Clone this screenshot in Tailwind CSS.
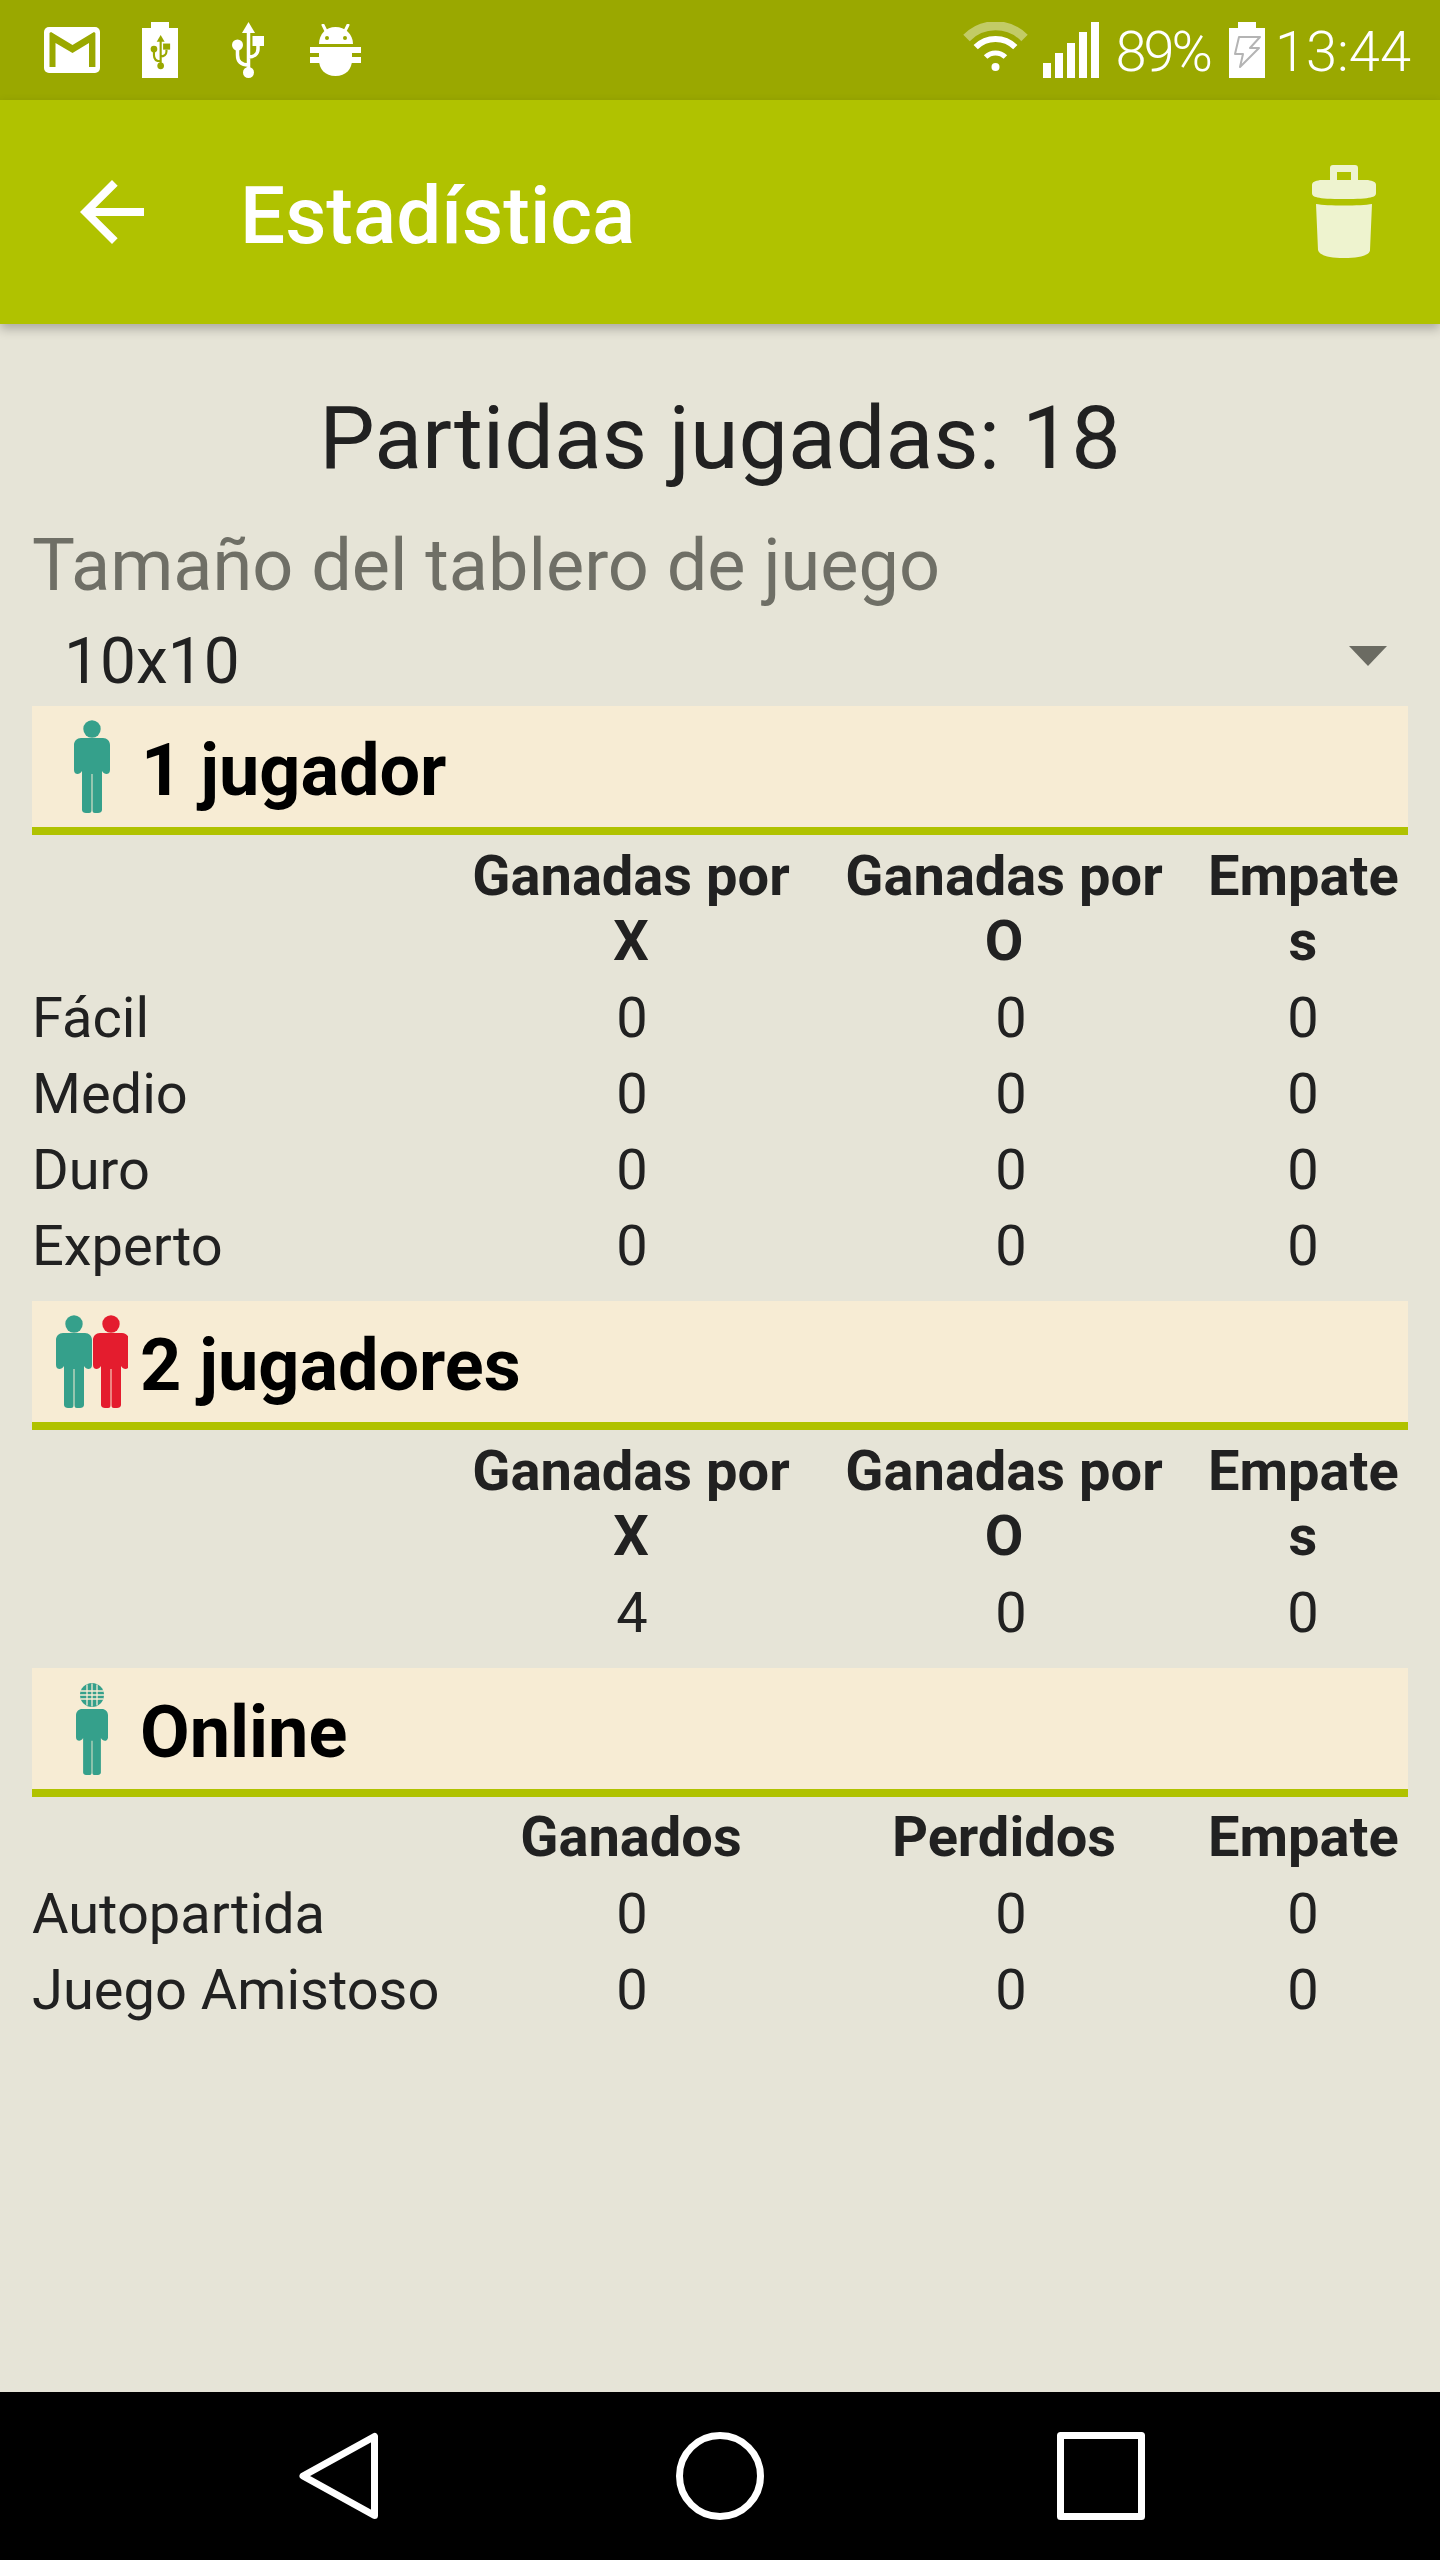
<!DOCTYPE html>
<html lang="es">
<head>
    <meta charset="UTF-8">
    <meta name="viewport" content="width=device-width, initial-scale=1.0">
    <title>Estadística</title>
    <script src="https://cdn.jsdelivr.net/npm/@tailwindcss/browser@4"></script>
</head>
<body class="bg-[#e6e4d7] [font-family:Roboto,sans-serif]">
    <svg class="hidden" width="0" height="0">
        <defs>
            <g id="usb">
                <path d="M16.5 0L10 11h13z" fill="currentColor"/>
                <path d="M16.5 10V48M5.5 26V33C5.5 40 10 43 16.5 43M26 24V27C26 32 22 35 16.5 35" fill="none" stroke="currentColor" stroke-width="3.5"/>
                <ellipse cx="16.5" cy="50.5" rx="5.5" ry="5.5" fill="currentColor"/>
                <ellipse cx="5.5" cy="23" rx="5.5" ry="5.5" fill="currentColor"/>
                <rect x="20.5" y="14" width="11.5" height="10" fill="currentColor"/>
            </g>
            <path id="person-body" d="M7 18H29C33 18 36 21 36 25V50C36 53 34 54 32.5 54C31 54 29 53 28 51V90C28 92 26 93 24 93H21C19 93 18.5 92 18.5 90V54H17.5V90C17.5 92 17 93 15 93H12C10 93 8 92 8 90V51C7 53 5 54 3.5 54C2 54 0 53 0 50V25C0 21 3 18 7 18Z"/>
        </defs>
    </svg>
    <div class="w-[1440px] h-[2560px] flex flex-col overflow-hidden">
        <!-- Status bar -->
        <div class="h-[100px] shrink-0 bg-[#9aa800] flex items-center justify-between text-white">
            <div class="flex items-start h-[56px] pl-[44px]">
                <svg class="mt-[5px]" width="56" height="46" viewBox="0 0 56 46">
                    <rect width="56" height="46" rx="5" fill="#fff"/>
                    <path d="M5.5 40V6L7 5L28.5 18L50 5L51.4 6V40H45V16L28.5 26L11.5 16V40Z" fill="#9aa800"/>
                </svg>
                <svg class="ml-[42px]" width="36" height="56" viewBox="0 0 36 56">
                    <path d="M9 0H27V6H36V56H0V6H9Z" fill="#fff"/>
                    <use href="#usb" transform="translate(8.6 13) scale(.61)" class="text-[#9aa800]"/>
                </svg>
                <svg class="ml-[54px]" width="32" height="56" viewBox="0 0 32 56"><use href="#usb" class="text-white"/></svg>
                <svg class="ml-[46px] mt-[2px]" width="51" height="52" viewBox="0 0 51 52" fill="#fff">
                    <path d="M13 1L17 9M38 1L34 9" stroke="#fff" stroke-width="3" stroke-linecap="round"/>
                    <path d="M9 20C9 10 16 3 25.500 3S43 10 43 20Z"/>
                    <circle cx="17" cy="14" r="2" fill="#9aa800"/>
                    <circle cx="35" cy="14" r="2" fill="#9aa800"/>
                    <path d="M9 23H42V36C42 45 36 52 25.500 52C15 52 9 45 9 36Z"/>
                    <rect y="23" width="51" height="6"/>
                    <rect y="33" width="51" height="6"/>
                </svg>
            </div>
            <div class="flex items-center pr-[29px] h-[56px]">
                <svg width="67" height="49" viewBox="0 0 67 49" class="-mt-[7px]">
                    <g fill="none" stroke="#fff">
                        <path d="M4.5 16A40.5 40.5 0 0 1 62.5 16" stroke-width="9" opacity=".4"/>
                        <path d="M13.7 25.2A28 28 0 0 1 53.3 25.2" stroke-width="6"/>
                        <path d="M23.6 35.1A14 14 0 0 1 43.4 35.1" stroke-width="5"/>
                    </g>
                    <circle cx="33.5" cy="45" r="4" fill="#fff"/>
                </svg>
                <svg class="ml-[14px]" width="56" height="56" viewBox="0 0 56 56" fill="#fff">
                    <rect x="0" y="41" width="8" height="15"/>
                    <rect x="12" y="31" width="8" height="25"/>
                    <rect x="24" y="21" width="8" height="35"/>
                    <rect x="36" y="10" width="8" height="46"/>
                    <rect x="48" y="0" width="8" height="56"/>
                </svg>
                <span class="ml-[16px] text-[56px] leading-[56px] pt-[4px] font-light tracking-[-3px]">89%</span>
                <svg class="ml-[19px]" width="36" height="56" viewBox="0 0 36 56">
                    <path d="M9 0H27V6H36V56H0V6H9Z" fill="#fff"/>
                    <path d="M10 15H31L21 26H30L11 45L14 32H6Z" fill="#fff" stroke="#b4b4b4" stroke-width="2" stroke-linejoin="round"/>
                </svg>
                <span class="ml-[10px] text-[56px] leading-[56px] pt-[4px] font-light">13:44</span>
            </div>
        </div>

        <!-- App bar -->
        <header class="relative z-10 h-[224px] shrink-0 bg-[#b0c200] shadow-[0_5px_10px_rgba(0,0,0,0.25)] flex items-center justify-between">
            <div class="flex items-center">
                <svg class="ml-[64px]" width="96" height="96" viewBox="0 0 24 24" fill="#fff"><path d="M20 11H7.83l5.59-5.59L12 4l-8 8 8 8 1.41-1.41L7.83 13H20v-2z"/></svg>
                <h1 class="ml-[80px] pt-[8px] text-[80px] leading-[94px] font-medium text-white">Estadística</h1>
            </div>
            <svg class="mr-[64px] -mt-[1px]" width="64" height="93" viewBox="0 0 64 93" fill="#eef3cf">
                <path d="M18 17V3C18 1 19 0 21 0H43C45 0 46 1 46 3V17H39V7H25V17Z"/>
                <path d="M8 15H56C61 16 64 17 64 20V28C64 32 60 34 32 34S0 32 0 28V20C0 17 3 16 8 15Z"/>
                <path d="M4 39C15 41 49 41 60 39L58 85C58 90 48 93 32 93S7 90 6 85Z"/>
            </svg>
        </header>

        <!-- Content -->
        <main class="flex-1 px-[32px] text-[#212121]">
            <p class="mt-[62px] text-center text-[88px] leading-[103px]">Partidas jugadas: 18</p>
            <p class="mt-[35px] text-[72px] leading-[84px] text-[#6f6f66]">Tamaño del tablero de juego</p>
            <div class="mt-[16px] h-[75px] pl-[32px] pr-[21px] flex items-center justify-between">
                <span class="text-[64px] leading-[75px]">10x10</span>
                <svg width="38" height="20" viewBox="0 0 38 20" fill="#6b6b62" class="-mt-[12px]"><path d="M0 0H38L19 20Z"/></svg>
            </div>

            <!-- 1 jugador -->
            <div class="mt-[7px] h-[129px] bg-[#f7ecd4] border-b-[8px] border-[#b0c200] flex items-center">
                <svg class="ml-[42px] shrink-0" width="36" height="93" viewBox="0 0 36 93" fill="#35a08b">
                    <circle cx="18" cy="9" r="8.7"/>
                    <use href="#person-body"/>
                </svg>
                <h2 class="ml-[31px] pt-[8px] text-[72px] leading-[84px] font-bold text-black">1 jugador</h2>
            </div>
            <div class="mt-[9px] grid grid-cols-[430px_338px_408px_190px] pr-[10px] text-[56px] text-center">
                <div></div>
                <div class="font-bold leading-[65px]">Ganadas por<br>X</div>
                <div class="font-bold leading-[65px]">Ganadas por<br>O</div>
                <div class="font-bold leading-[65px]">Empate<br>s</div>

                <div class="h-[76px] leading-[76px] text-left mt-[6px]">Fácil</div>
                <div class="h-[76px] leading-[76px] mt-[6px] pl-[2px]">0</div>
                <div class="h-[76px] leading-[76px] mt-[6px] pl-[14px]">0</div>
                <div class="h-[76px] leading-[76px] mt-[6px]">0</div>

                <div class="h-[76px] leading-[76px] text-left">Medio</div>
                <div class="h-[76px] leading-[76px] pl-[2px]">0</div>
                <div class="h-[76px] leading-[76px] pl-[14px]">0</div>
                <div class="h-[76px] leading-[76px]">0</div>

                <div class="h-[76px] leading-[76px] text-left">Duro</div>
                <div class="h-[76px] leading-[76px] pl-[2px]">0</div>
                <div class="h-[76px] leading-[76px] pl-[14px]">0</div>
                <div class="h-[76px] leading-[76px]">0</div>

                <div class="h-[76px] leading-[76px] text-left">Experto</div>
                <div class="h-[76px] leading-[76px] pl-[2px]">0</div>
                <div class="h-[76px] leading-[76px] pl-[14px]">0</div>
                <div class="h-[76px] leading-[76px]">0</div>
            </div>

            <!-- 2 jugadores -->
            <div class="mt-[17px] h-[129px] bg-[#f7ecd4] border-b-[8px] border-[#b0c200] flex items-center">
                <svg class="ml-[24px] shrink-0" width="72" height="93" viewBox="0 0 72 93">
                    <g fill="#35a08b"><circle cx="18" cy="9" r="8.7"/><use href="#person-body"/></g>
                    <g fill="#e41c2e" transform="translate(37 0)"><circle cx="18" cy="9" r="8.7"/><use href="#person-body"/></g>
                </svg>
                <h2 class="ml-[12px] pt-[8px] text-[72px] leading-[84px] font-bold text-black">2 jugadores</h2>
            </div>
            <div class="mt-[9px] grid grid-cols-[430px_338px_408px_190px] pr-[10px] text-[56px] text-center">
                <div></div>
                <div class="font-bold leading-[65px]">Ganadas por<br>X</div>
                <div class="font-bold leading-[65px]">Ganadas por<br>O</div>
                <div class="font-bold leading-[65px]">Empate<br>s</div>

                <div class="h-[76px] leading-[76px] mt-[6px]"></div>
                <div class="h-[76px] leading-[76px] mt-[6px] pl-[2px]">4</div>
                <div class="h-[76px] leading-[76px] mt-[6px] pl-[14px]">0</div>
                <div class="h-[76px] leading-[76px] mt-[6px]">0</div>
            </div>

            <!-- Online -->
            <div class="mt-[17px] h-[129px] bg-[#f7ecd4] border-b-[8px] border-[#b0c200] flex items-center">
                <svg class="ml-[44px] shrink-0" width="32" height="92" viewBox="0 0 32 92" fill="#35a08b">
                    <circle cx="16" cy="12" r="12"/>
                    <g stroke="#f7ecd4" stroke-width="1.3" fill="none">
                        <path d="M4.5 8H27.5M3.5 12H28.5M4.5 16H27.5"/>
                        <path d="M11 1.5V22.5M16 0.5V23.5M21 1.5V22.5"/>
                    </g>
                    <g transform="translate(0 10.2) scale(.889 .88)"><use href="#person-body"/></g>
                </svg>
                <h2 class="ml-[32px] pt-[8px] text-[72px] leading-[84px] font-bold text-black">Online</h2>
            </div>
            <div class="mt-[7px] grid grid-cols-[430px_338px_408px_190px] pr-[10px] text-[56px] text-center">
                <div></div>
                <div class="font-bold leading-[66px]">Ganados</div>
                <div class="font-bold leading-[66px]">Perdidos</div>
                <div class="font-bold leading-[66px]">Empate</div>

                <div class="h-[76px] leading-[76px] text-left mt-[6px]">Autopartida</div>
                <div class="h-[76px] leading-[76px] mt-[6px] pl-[2px]">0</div>
                <div class="h-[76px] leading-[76px] mt-[6px] pl-[14px]">0</div>
                <div class="h-[76px] leading-[76px] mt-[6px]">0</div>

                <div class="h-[76px] leading-[76px] text-left">Juego Amistoso</div>
                <div class="h-[76px] leading-[76px] pl-[2px]">0</div>
                <div class="h-[76px] leading-[76px] pl-[14px]">0</div>
                <div class="h-[76px] leading-[76px]">0</div>
            </div>
        </main>

        <!-- Nav bar -->
        <nav class="h-[168px] shrink-0 bg-black">
            <div class="w-[1143px] h-full mx-auto grid grid-cols-3 place-items-center">
                <svg width="80" height="88" viewBox="0 0 80 88" fill="none" stroke="#fff" stroke-width="7" stroke-linejoin="round"><path d="M75.500 4.500V83.500L4 44Z"/></svg>
                <svg width="88" height="88" viewBox="0 0 88 88" fill="none" stroke="#fff" stroke-width="7"><circle cx="44" cy="44" r="40.500"/></svg>
                <svg width="88" height="88" viewBox="0 0 88 88" fill="none" stroke="#fff" stroke-width="7" stroke-linejoin="round"><rect x="3.500" y="3.500" width="81" height="81"/></svg>
            </div>
        </nav>
    </div>
</body>
</html>
